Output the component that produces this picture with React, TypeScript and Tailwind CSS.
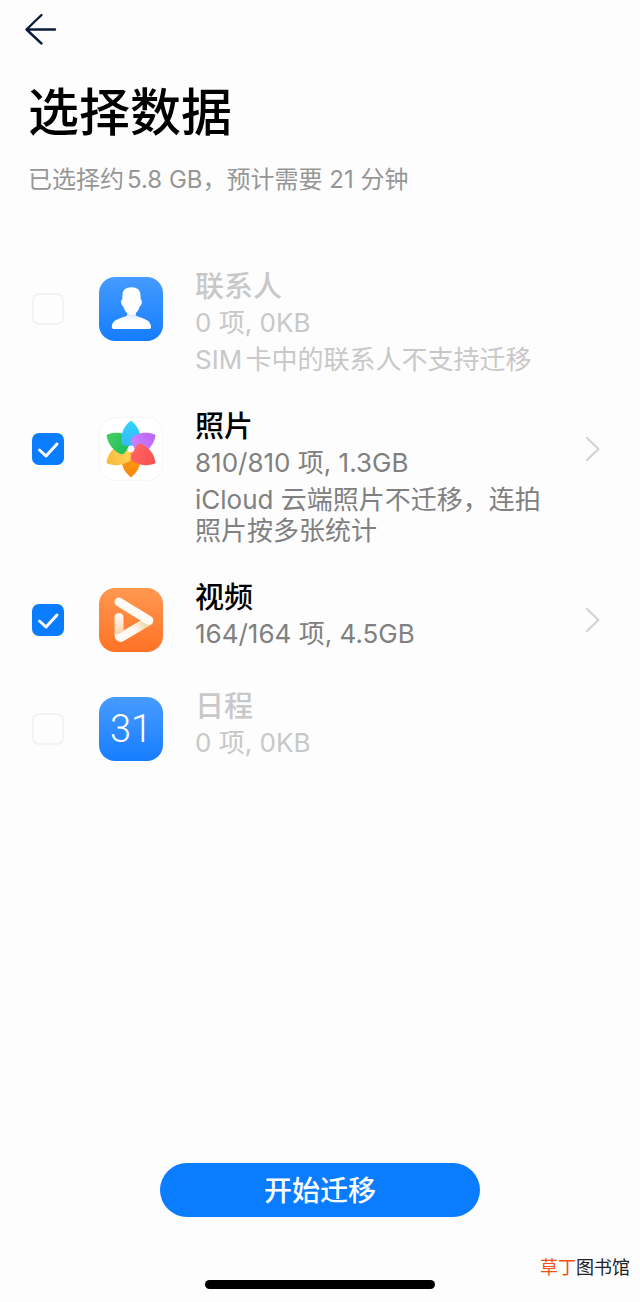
import React, {useState} from "react";

const ContactIcon = () => (
    <svg className="size-16" viewBox="0 0 64 64" aria-hidden="true">
        <defs>
            <linearGradient id="contactBg" x1="0" y1="0" x2="0" y2="1">
                <stop offset="0" stopColor="#469bff"/>
                <stop offset="1" stopColor="#147dff"/>
            </linearGradient>
            <linearGradient id="contactNeck" x1="0" y1="36" x2="0" y2="44" gradientUnits="userSpaceOnUse">
                <stop offset="0" stopColor="#d3e1fc"/>
                <stop offset="1" stopColor="#ffffff"/>
            </linearGradient>
        </defs>
        <rect width="64" height="64" rx="16" fill="url(#contactBg)"/>
        <path d="M28 34V38.5C23 41.5 14.8 41.5 13.1 47.8C12.7 49.4 12.7 50.2 13 51C13.5 52 14.5 52.1 16 52.1H49C50.5 52.1 51.6 52 51.9 51C52.2 50.2 52.1 49.3 51.7 47.8C50 41.5 42 41.5 37 38.5V34Z" fill="url(#contactNeck)"/>
        <path d="M32.5 10.2C26.5 10.2 23.7 13.2 23.5 18L23.3 22.6C22 22.8 21.9 24.6 22.3 26.2C22.7 28 23.4 29 24.3 29.3C25.2 33.8 28.6 37.8 32.5 38C36.4 37.8 39.8 33.8 40.7 29.3C41.6 29 42.3 28 42.7 26.2C43.1 24.6 43 22.8 41.7 22.6L41.5 18C41.3 13.2 38.5 10.2 32.5 10.2Z" fill="#ffffff"/>
    </svg>
)

const petals = [
    {angle: 180, id: "petalOrange", from: "#f98608", to: "#ff9f16"},
    {angle: 240, id: "petalYellow", from: "#f9b93c", to: "#ffd257"},
    {angle: 300, id: "petalGreen", from: "#45cf62", to: "#1fbf5a"},
    {angle: 0, id: "petalCyan", from: "#2fd4fb", to: "#35b8fb"},
    {angle: 60, id: "petalPurple", from: "#ba66f0", to: "#cb80ff"},
    {angle: 120, id: "petalRed", from: "#f9504f", to: "#ff6262"},
]

const PhotoIcon = () => (
    <svg className="size-16" viewBox="0 0 64 64" aria-hidden="true">
        <defs>
            {
                petals.map(({id, from, to}) => (
                    <linearGradient id={id} key={id} x1="0" y1="0" x2="0" y2="1">
                        <stop offset="0" stopColor={from}/>
                        <stop offset="1" stopColor={to}/>
                    </linearGradient>
                ))
            }
        </defs>
        <rect x="0.5" y="0.5" width="63" height="63" rx="15.5" fill="#ffffff" stroke="#f5f5f5"/>
        {
            petals.map(({angle, id}) => (
                <path
                    key={id}
                    transform={`rotate(${angle} 32 32)`}
                    fill={`url(#${id})`}
                    d="M31.2 4.2Q32 3.6 32.8 4.2C37 7.6 40.4 12.6 41.2 18.4C41.7 21.5 41.8 23.5 41.4 25.5C41 27.8 39.4 28.5 36.5 28.7C33.5 28.9 30.5 28.9 27.5 28.7C24.6 28.5 23 27.8 22.6 25.5C22.2 23.5 22.3 21.5 22.8 18.4C23.6 12.6 27 7.6 31.2 4.2Z"/>
            ))
        }
        <circle cx="32" cy="32" r="3.2" fill="#ffffff"/>
    </svg>
)

const VideoIcon = () => (
    <svg className="size-16" viewBox="0 0 64 64" aria-hidden="true">
        <defs>
            <linearGradient id="videoBg" x1="0" y1="0" x2="0" y2="1">
                <stop offset="0" stopColor="#ff9850"/>
                <stop offset="1" stopColor="#ff7226"/>
            </linearGradient>
            <linearGradient id="videoFold" x1="47" y1="35" x2="35" y2="42" gradientUnits="userSpaceOnUse">
                <stop offset="0" stopColor="#f0d6a4"/>
                <stop offset="1" stopColor="#fffaf4"/>
            </linearGradient>
            <linearGradient id="videoSide" x1="0" y1="26" x2="0" y2="47" gradientUnits="userSpaceOnUse">
                <stop offset="0" stopColor="#fffaf4"/>
                <stop offset="1" stopColor="#ffcfa8"/>
            </linearGradient>
        </defs>
        <rect width="64" height="64" rx="16" fill="url(#videoBg)"/>
        <g fill="none" strokeWidth="9" strokeLinecap="round" strokeLinejoin="round">
            <path d="M49.8 32.8L22.3 49.2Q20 50 20 46.5" stroke="url(#videoFold)"/>
            <path d="M15.5 29.5A4.5 4.5 0 0 1 24.5 29.5V43.2L20 46H15.5Z" fill="url(#videoSide)"/>
            <path d="M20 14L49.8 32.4" stroke="#fffaf4"/>
        </g>
    </svg>
)

const CalendarIcon = () => (
    <div className="flex size-16 items-center justify-center rounded-2xl bg-linear-to-b from-[#469bff] to-[#147dff] font-[Roboto] text-[38px] leading-none font-light text-white">
        31
    </div>
)

const items = [
    {id: "contacts", title: "联系人", detail: "0 项, 0KB", note: "SIM卡中的联系人不支持迁移", icon: <ContactIcon/>, enabled: false},
    {id: "photos", title: "照片", detail: "810/810 项, 1.3GB", note: "iCloud 云端照片不迁移，连拍照片按多张统计", icon: <PhotoIcon/>, enabled: true},
    {id: "videos", title: "视频", detail: "164/164 项, 4.5GB", note: "", icon: <VideoIcon/>, enabled: true},
    {id: "calendar", title: "日程", detail: "0 项, 0KB", note: "", icon: <CalendarIcon/>, enabled: false},
]

type Item = typeof items[number]

const DataRow = ({item}: {item: Item}) => {
    const [checked, setChecked] = useState(item.enabled);
    return (
        <li className="flex min-h-[75px] flex-row items-start">
            {/* 复选框 */}
            <div className="mt-6 grid size-8 shrink-0">
                <input
                    id={item.id}
                    type="checkbox"
                    checked={checked}
                    disabled={!item.enabled}
                    onChange={e => setChecked(e.target.checked)}
                    className="col-start-1 row-start-1 size-8 appearance-none rounded-[7px] border-2 border-[#f3f3f3] bg-[#fdfdfd] checked:border-[#0a7cff] checked:bg-[#0a7cff]"/>
                {
                    checked &&
                    <svg className="pointer-events-none col-start-1 row-start-1 size-8" viewBox="0 0 32 32" aria-hidden="true">
                        <path d="M7.5 17L14 23L25 11" fill="none" stroke="#ffffff" strokeWidth="3" strokeLinecap="round" strokeLinejoin="round"/>
                    </svg>
                }
            </div>
            <div className="mt-2 ml-[35px] shrink-0">{item.icon}</div>
            <label htmlFor={item.id} className={item.enabled ? "ml-8 flex-1 text-[#808080]" : "ml-8 flex-1 text-[#c8c8c8]"}>
                <span className={item.enabled ? "block text-[29px] leading-9 font-medium text-black" : "block text-[29px] leading-9 font-medium"}>
                    {item.title}
                </span>
                <span className="block text-[26px] leading-9">{item.detail}</span>
                {item.note && <span className="mt-[3px] block text-[26px] leading-[31px]">{item.note}</span>}
            </label>
            <div className="mt-6 ml-6 flex w-12 shrink-0 justify-center">
                {
                    item.enabled &&
                    <button type="button" aria-label={item.title} className="size-8">
                        <svg className="size-8" viewBox="0 0 32 32" fill="none" aria-hidden="true">
                            <path d="M11 5L22.5 16L11 27" stroke="#d3d3d3" strokeWidth="2.2" strokeLinecap="round" strokeLinejoin="round"/>
                        </svg>
                    </button>
                }
            </div>
        </li>
    )
}

export default function App() {
    return (
        <div className="flex min-h-screen flex-col bg-[#fdfdfd] font-[Inter,'Noto_Sans_CJK_SC',sans-serif] [text-autospace:normal]">
            <header className="px-7">
                <button type="button" aria-label="返回" className="mt-3 -ml-1 block">
                    <svg className="size-[34px]" viewBox="0 0 34 34" fill="none" aria-hidden="true">
                        <path d="M31 17.5H2.5M17.5 3L2.5 17.5L17.5 31.5" stroke="#0b1b38" strokeWidth="2.4" strokeLinecap="round" strokeLinejoin="round"/>
                    </svg>
                </button>
                <h1 className="mt-[34px] text-[51px] leading-[66px] font-medium text-black">选择数据</h1>
                <p className="mt-[18px] text-[24px] leading-8 text-[#969696]">已选择约5.8 GB，预计需要 21 分钟</p>
            </header>
            <main className="flex-1">
                <ul className="mt-[73px] flex flex-col gap-[34px] pr-6 pl-8">
                    {items.map(item => <DataRow key={item.id} item={item}/>)}
                </ul>
            </main>
            <footer className="flex flex-col items-center pt-12 pb-[13px]">
                <button type="button" className="h-[54px] w-1/2 rounded-full bg-[#0a7cff] pt-0.5 text-[28px] font-medium text-white">
                    开始迁移
                </button>
                {/* 水印 */}
                <div className="mt-10 self-end pr-2.5 text-[18px] leading-[22px] text-[#222222]">
                    <span className="text-[#f4500f]">草丁</span>图书馆
                </div>
                <div className="mt-px h-[9px] w-[36%] rounded-full bg-black"/>
            </footer>
        </div>
    )
}
